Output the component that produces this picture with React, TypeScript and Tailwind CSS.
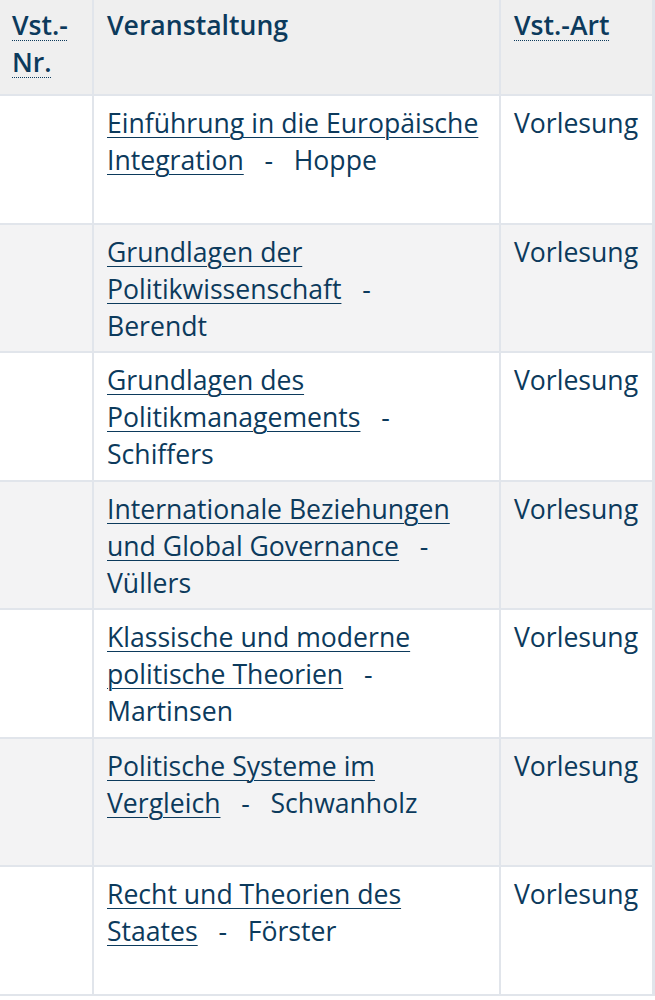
const rows = [
  { title: "Einführung in die Europäische Integration", lecturer: "Hoppe" },
  { title: "Grundlagen der Politikwissenschaft", lecturer: "Berendt" },
  { title: "Grundlagen des Politikmanagements", lecturer: "Schiffers" },
  { title: "Internationale Beziehungen und Global Governance", lecturer: "Vüllers" },
  { title: "Klassische und moderne politische Theorien", lecturer: "Martinsen" },
  { title: "Politische Systeme im Vergleich", lecturer: "Schwanholz" },
  { title: "Recht und Theorien des Staates", lecturer: "Förster" },
];

const abbr = "underline decoration-dotted decoration-1 underline-offset-[5px]";

export default function App() {
  return (
    <div className="w-[655px] bg-white font-['Open_Sans',sans-serif] text-[26.6px] leading-[37px] text-[#0c3a5c]">
      <div className="grid grid-cols-[92px_405px_1fr] auto-rows-[126.5px] grid-rows-[94px] gap-[2px] bg-[#e1e5eb] pr-[3px] pb-[2px]">
        <div className="bg-[#efefef] px-[12px] py-[7px] font-semibold">
          <span className={abbr}>Vst.-</span>
          <br />
          <span className={abbr}>Nr.</span>
        </div>
        <div className="bg-[#efefef] px-[13px] py-[7px] font-semibold">Veranstaltung</div>
        <div className="bg-[#efefef] px-[13px] py-[7px] font-semibold">
          <span className={abbr}>Vst.-Art</span>
        </div>
        {rows.map((r, i) => {
          const bg = i % 2 === 1 ? "bg-[#f3f3f4]" : "bg-white";
          return [
            <div key={`a${i}`} className={bg} />,
            <div key={`b${i}`} className={`${bg} px-[13px] py-[9px]`}>
              <a href="#" className="underline decoration-1 underline-offset-[4px]">
                {r.title}
              </a>
              {"\u00a0\u00a0\u00a0-\u00a0\u00a0 "}
              {r.lecturer}
            </div>,
            <div key={`c${i}`} className={`${bg} px-[13px] py-[9px]`}>
              Vorlesung
            </div>,
          ];
        })}
      </div>
    </div>
  );
}
